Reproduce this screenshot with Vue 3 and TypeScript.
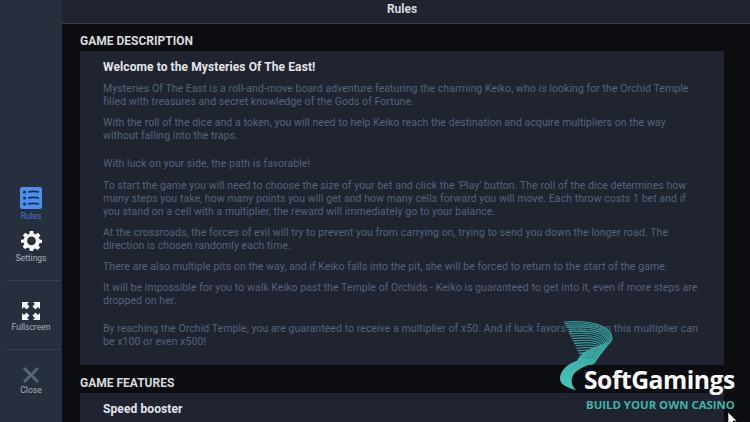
<script setup lang="ts">
interface NavItem {
  label: string;
  icon: string;
  active?: boolean;
}

// サイドバーの項目（グループごと）
const navGroups: NavItem[][] = [
  [
    { label: 'Rules', icon: 'rules', active: true },
    { label: 'Settings', icon: 'settings' },
  ],
  [{ label: 'Fullscreen', icon: 'fullscreen' }],
  [{ label: 'Close', icon: 'close' }],
];

interface Para {
  text: string;
  wide?: boolean;
}

const paragraphs: Para[] = [
  { text: 'Mysteries Of The East is a roll-and-move board adventure featuring the charming Keiko, who is looking for the Orchid Temple filled with treasures and secret knowledge of the Gods of Fortune.' },
  { text: 'With the roll of the dice and a token, you will need to help Keiko reach the destination and acquire multipliers on the way without falling into the traps.', wide: true },
  { text: 'With luck on your side, the path is favorable!' },
  { text: "To start the game you will need to choose the size of your bet and click the 'Play' button. The roll of the dice determines how many steps you take, how many points you will get and how many cells forward you will move. Each throw costs 1 bet and if you stand on a cell with a multiplier, the reward will immediately go to your balance." },
  { text: 'At the crossroads, the forces of evil will try to prevent you from carrying on, trying to send you down the longer road. The direction is chosen randomly each time.' },
  { text: 'There are also multiple pits on the way, and if Keiko falls into the pit, she will be forced to return to the start of the game.' },
  { text: 'It will be impossible for you to walk Keiko past the Temple of Orchids - Keiko is guaranteed to get into it, even if more steps are dropped on her.', wide: true },
  { text: 'By reaching the Orchid Temple, you are guaranteed to receive a multiplier of x50. And if luck favors you, then this multiplier can be x100 or even x500!' },
];

// ロゴの渦巻き
const swirl = Array.from({ length: 16 }, (_, i) => {
  const t = Math.pow(i / 15, 1.15);
  const sx = 9 + 16 * t;
  const sy = 7 + 34 * t;
  const rx = 57 - 17 * t;
  const ry = 24 + 20 * t;
  return `M${sx} ${sy} C${sx + 26 - 8 * t} ${sy - 2} ${rx} ${ry - 14 + 9 * t} ${rx} ${ry} C${rx} ${ry + 7} ${30 + 8 * t} ${ry + 5} 22 ${47 + 3 * t}`;
});
</script>

<template>
  <div class="screen">
    <aside class="sidebar">
      <div v-for="(group, g) in navGroups" :key="g" class="nav-group">
        <div v-for="item in group" :key="item.label" class="nav-item" :class="{ active: item.active }">
          <svg v-if="item.icon === 'rules'" class="icon" width="22" height="22" viewBox="0 0 22 22">
            <rect width="22" height="22" rx="2" fill="#4a90f0" />
            <g fill="#1f2a3c">
              <circle cx="4.5" cy="5" r="1.5" />
              <circle cx="4.5" cy="11" r="1.5" />
              <circle cx="4.5" cy="17" r="1.5" />
            </g>
            <g stroke="#1f2a3c" stroke-width="1.6" fill="none">
              <path d="M8 5 Q13 3.8 19 5" />
              <path d="M8 11 Q13 9.8 19 11" />
              <path d="M8 17 Q13 15.8 19 17" />
            </g>
          </svg>
          <svg v-else-if="item.icon === 'settings'" class="icon" width="21" height="21" viewBox="0 0 24 24">
            <path fill="#fff" d="M10 1h4l.6 3.2 2 .8L19.300 3.200l2.800 2.800-1.800 2.700.8 2L24 11.300v3.400l-3.200.6-.8 2 1.800 2.700-2.800 2.800-2.700-1.800-2 .8L14 24h-4l-.6-3.200-2-.8-2.700 1.800-2.800-2.800 1.800-2.700-.8-2L0 14.700v-3.400l3.200-.6.8-2L2.200 6 5 3.200 7.700 5l2-.8z" />
            <circle cx="12" cy="12.500" r="5" fill="#272f3e" />
          </svg>
          <svg v-else-if="item.icon === 'fullscreen'" class="icon" width="18" height="18" viewBox="0 0 18 18" fill="#fff">
            <path d="M0 0h7L5 2l2.500 2.500-3 3L2 5 0 7z" />
            <path d="M18 0v7l-2-2-2.500 2.500-3-3L13 2l-2-2z" />
            <path d="M0 18v-7l2 2 2.500-2.500 3 3L5 16l2 2z" />
            <path d="M18 18h-7l2-2-2.500-2.500 3-3L16 13l2-2z" />
          </svg>
          <svg v-else class="icon" width="18" height="18" viewBox="0 0 18 18">
            <path d="M2 2 16 16M16 2 2 16" stroke="#566676" stroke-width="3" />
          </svg>
          <span class="nav-label">{{ item.label }}</span>
        </div>
      </div>
    </aside>

    <main class="main">
      <header class="topbar">Rules</header>
      <div class="content">
        <h2 class="section-title">GAME DESCRIPTION</h2>
        <section class="panel">
          <h3 class="panel-title">Welcome to the Mysteries Of The East!</h3>
          <p v-for="(p, i) in paragraphs" :key="i" :class="{ wide: p.wide }">{{ p.text }}</p>
        </section>
        <h2 class="section-title second">GAME FEATURES</h2>
        <section class="panel features">
          <h3 class="panel-title">Speed booster</h3>
        </section>
      </div>
    </main>

    <div class="logo">
      <svg class="swirl" width="70" height="80" viewBox="0 0 70 80" fill="none">
        <defs>
          <linearGradient id="swirlGrad" gradientUnits="userSpaceOnUse" x1="40" y1="5" x2="15" y2="70">
            <stop offset="0" stop-color="#2f9497" />
            <stop offset="1" stop-color="#45c2b6" />
          </linearGradient>
        </defs>
        <path v-for="(d, i) in swirl" :key="i" :d="d" stroke="url(#swirlGrad)" stroke-width="1.1" />
        <path d="M38 43 C22 44 8 49 5 62 C4 69 12 73 21 75 C15 69 15 61 22 56 C28 51 35 50 41 47 Z" fill="url(#swirlGrad)" />
      </svg>
      <div class="logo-name">SoftGamings</div>
      <div class="logo-tag">BUILD YOUR OWN CASINO</div>
    </div>

    <svg class="cursor" width="10" height="16" viewBox="0 0 10 16">
      <path d="M1 0v13l3-3 2 5 2-1-2-5h4z" fill="#fff" stroke="#000" stroke-width="0.6" />
    </svg>
  </div>
</template>

<style scoped>
.screen {
  position: relative;
  display: flex;
  width: 750px;
  height: 422px;
  overflow: hidden;
  background: #0b0d11;
  font-family: Roboto, "Liberation Sans", sans-serif;
}
.sidebar {
  flex: none;
  display: flex;
  flex-direction: column;
  justify-content: flex-end;
  box-sizing: border-box;
  width: 62px;
  padding: 0 2px 27px 6px;
  background: #272f3e;
}
.nav-group {
  display: flex;
  flex-direction: column;
  gap: 9px;
  padding: 21px 0 17px;
  border-bottom: 1px solid #39414f;
}
.nav-group:last-child {
  padding: 16px 0 0;
  border-bottom: none;
}
.nav-group:last-child .nav-item {
  gap: 1px;
}
.nav-item {
  display: flex;
  flex-direction: column;
  align-items: center;
  gap: 2px;
  margin-right: 2px;
  margin-left: -2px;
  color: #a9afb9;
}
.nav-item.active {
  color: #3f78c9;
}
.nav-label {
  font-size: 8.500px;
  line-height: 10px;
}
.main {
  flex: 1;
  min-width: 0;
}
.topbar {
  height: 23px;
  padding-right: 8px;
  border-bottom: 1px solid #3a414e;
  background: #1f2430;
  color: #d8dadd;
  font-size: 12px;
  font-weight: 700;
  line-height: 19px;
  text-align: center;
}
.content {
  padding: 9px 26px 0 18px;
}
.section-title {
  margin: 0 0 2px;
  color: #d9dbde;
  font-size: 12px;
  font-weight: 700;
  line-height: 16px;
}
.section-title.second {
  margin-top: 10px;
}
.panel {
  padding: 8px 23px 8px 23px;
  background: #1f2430;
}
.panel-title {
  margin: 0 0 7px;
  color: #e4e5e8;
  font-size: 12px;
  font-weight: 700;
  line-height: 16px;
  letter-spacing: 0.1px;
}
.panel p {
  margin: 0 0 8.250px;
  color: #56627d;
  font-size: 10.500px;
  line-height: 13px;
  letter-spacing: 0.065px;
}
.panel p.wide {
  margin-bottom: 15px;
}
.logo {
  position: absolute;
  left: 559px;
  top: 319px;
  width: 180px;
  height: 96px;
}
.swirl {
  position: absolute;
  left: -4px;
  top: -4px;
}
.logo-name {
  position: absolute;
  left: 25px;
  top: 47px;
  color: #fff;
  font-family: "Open Sans", sans-serif;
  font-size: 24.700px;
  font-weight: 700;
  line-height: 28px;
  letter-spacing: -0.5px;
}
.logo-tag {
  position: absolute;
  left: 27px;
  top: 80px;
  color: #40b4aa;
  font-family: "Open Sans", sans-serif;
  font-size: 11.400px;
  font-weight: 700;
  line-height: 12px;
  white-space: nowrap;
}
.cursor {
  position: absolute;
  left: 727px;
  top: 412px;
}
</style>
